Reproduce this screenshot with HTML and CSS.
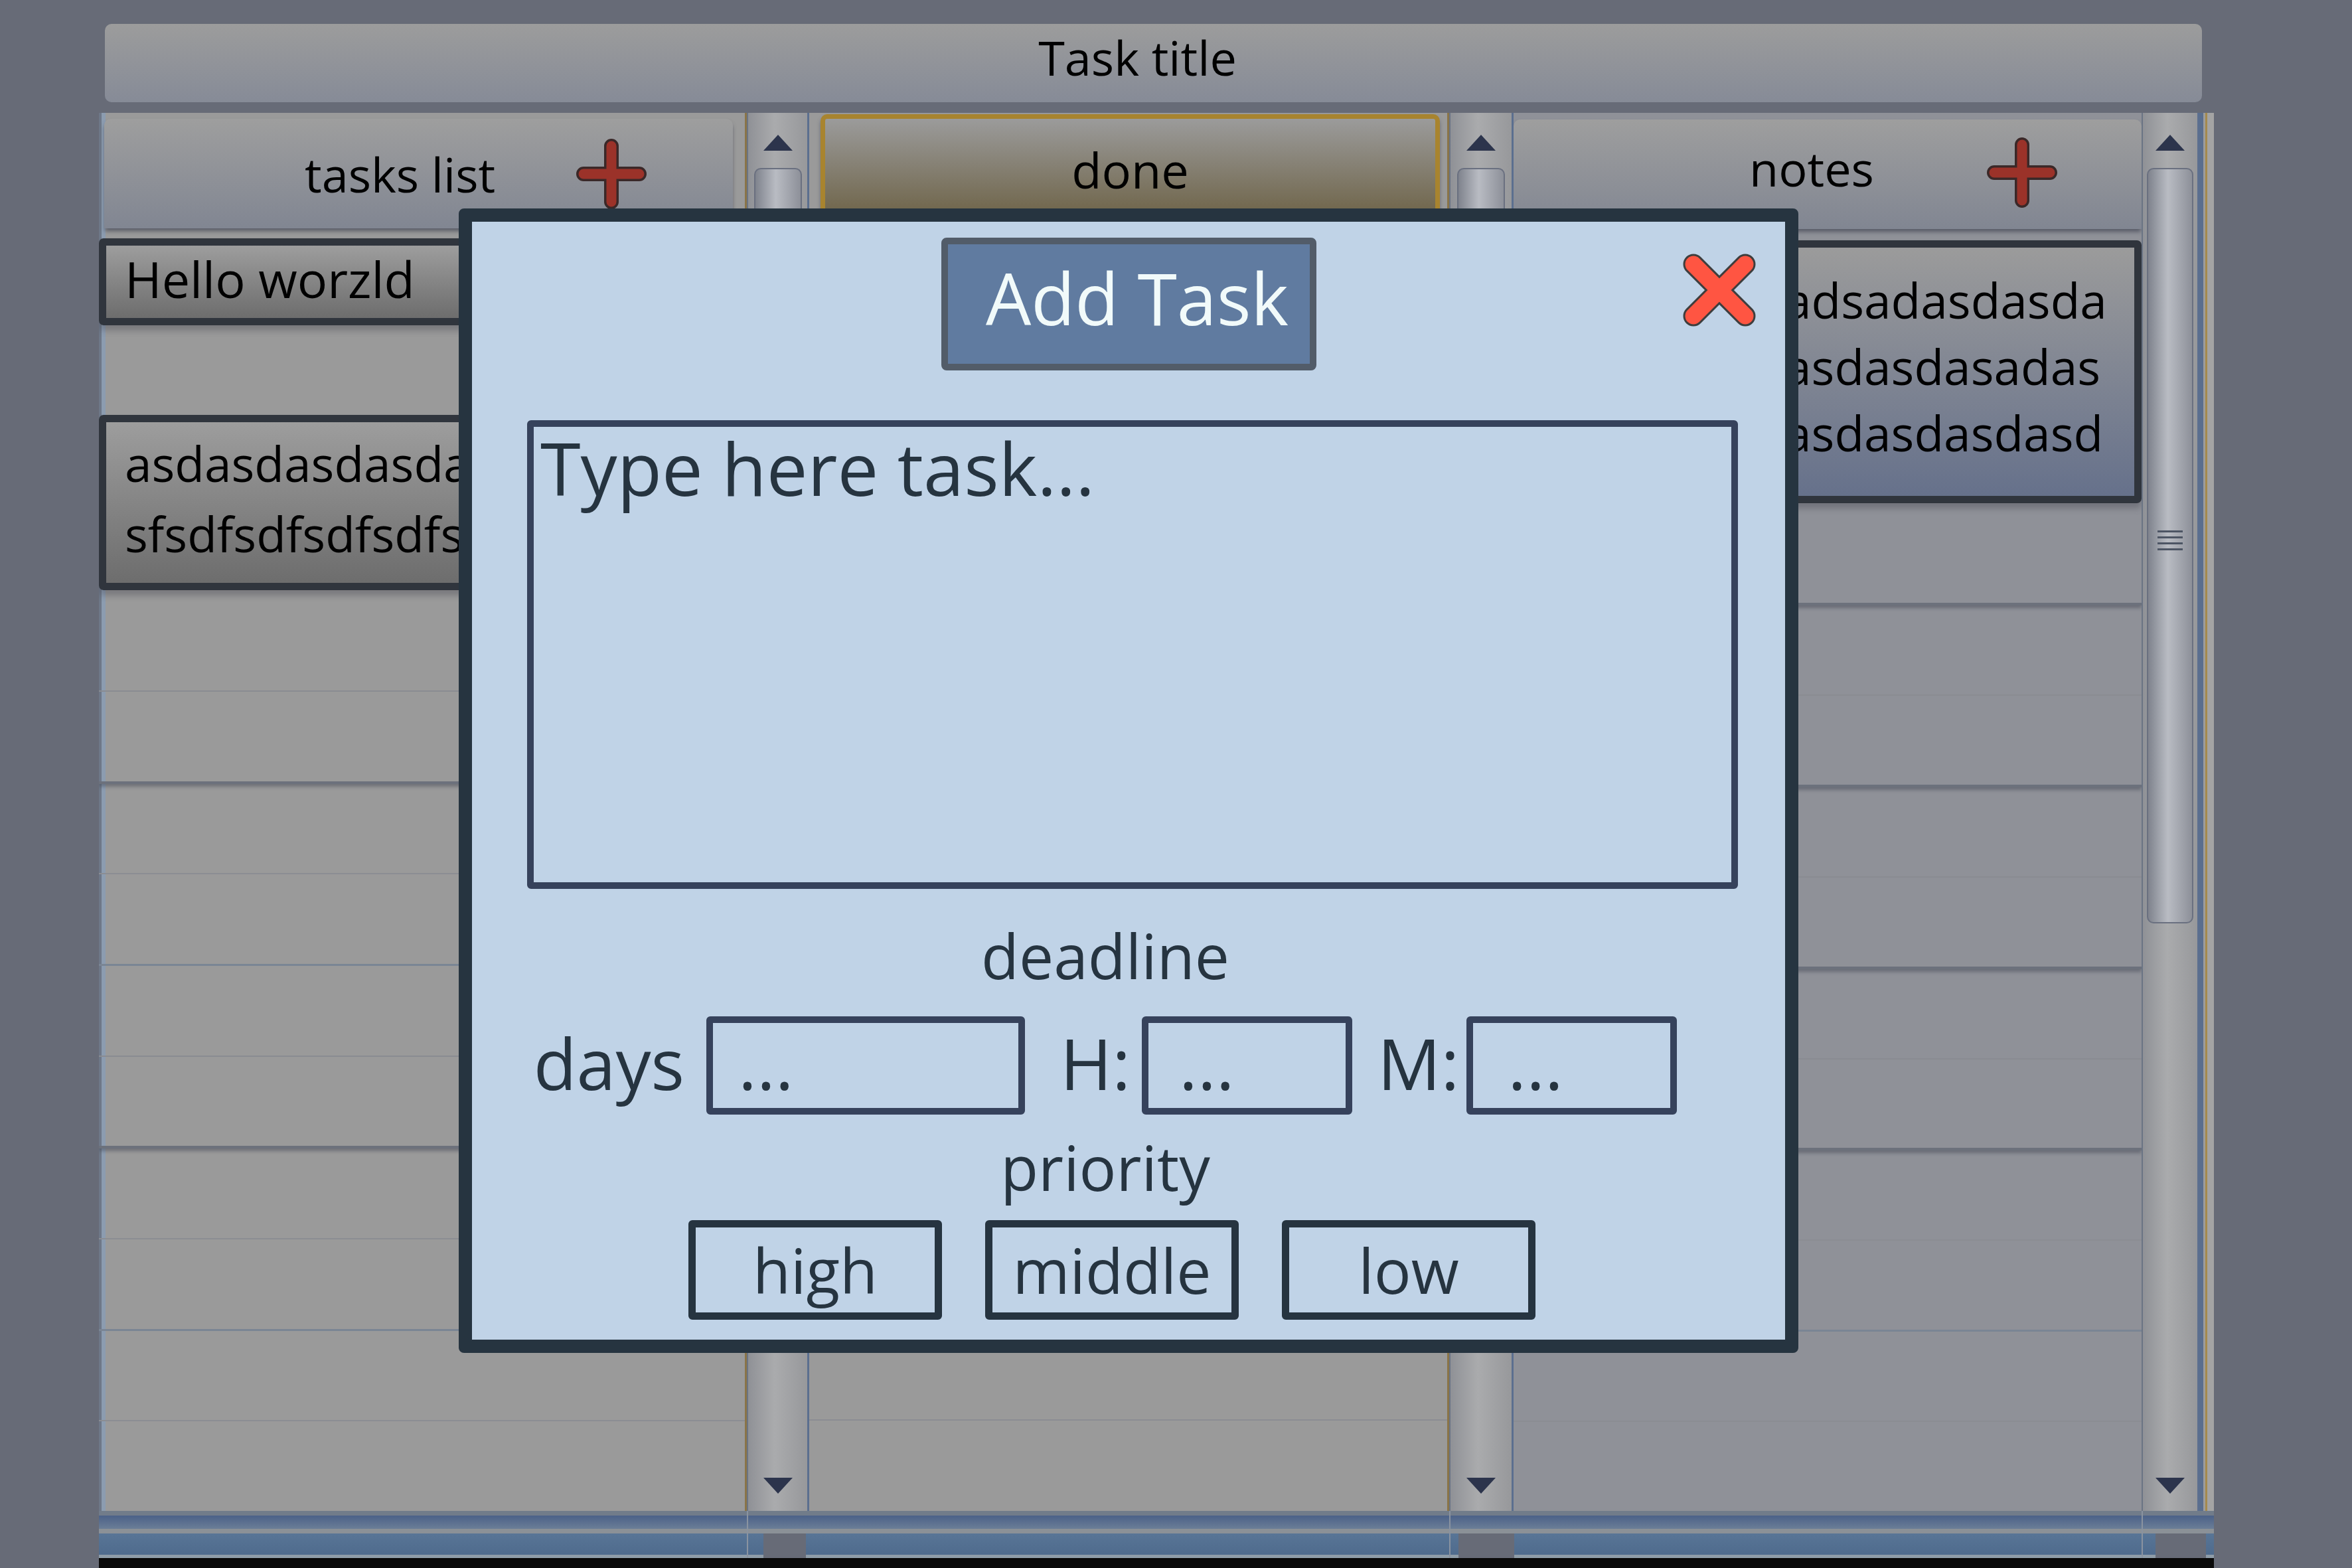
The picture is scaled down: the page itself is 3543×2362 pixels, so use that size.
FILE: index.html
```html
<!DOCTYPE html>
<html lang="en">
<head>
<meta charset="utf-8">
<title>Task board</title>
<link rel="stylesheet" href="styles.css">
</head>
<body>
<div class="app">
  <header class="titlebar"><h1 class="titlebar-text">Task title</h1></header>

  <main class="board">
    <section class="col col-tasks">
      <div class="col-head">
        <h2 class="col-title">tasks list</h2>
        <span class="add-icon"><svg viewBox="0 0 106 106" width="106" height="106"><path d="M53 11V95M11 53H95" fill="none" stroke="#3a2828" stroke-width="22" stroke-linecap="round"/><path d="M53 11V95M11 53H95" fill="none" stroke="#9b3229" stroke-width="15" stroke-linecap="round"/></svg></span>
      </div>
      <div class="col-body">
        <div class="card card-1">Hello worzld</div>
        <div class="slot"></div>
        <div class="card card-2">asdasdasdasdasdasdasd<br>sfsdfsdfsdfsdfsdfsdfs</div>
        <div class="rows">
          <div class="row row-lead"></div>
          <div class="row row-dark"></div>
          <div class="row"></div>
          <div class="row row-mid"></div>
          <div class="row"></div>
          <div class="row row-dark"></div>
          <div class="row"></div>
          <div class="row row-mid"></div>
          <div class="row"></div>
          <div class="row row-last"></div>
        </div>
      </div>
    </section>

    <div class="scroll"><span class="arrow-up"></span><span class="thumb"></span><span class="arrow-down"></span></div>

    <section class="col col-done">
      <div class="col-head">
        <h2 class="col-title">done</h2>
      </div>
      <div class="col-body">
        <div class="rows">
          <div class="row"></div><div class="row"></div><div class="row"></div><div class="row"></div>
          <div class="row"></div><div class="row"></div><div class="row"></div><div class="row"></div>
          <div class="row"></div><div class="row"></div><div class="row"></div><div class="row"></div>
          <div class="row"></div><div class="row row-last"></div>
        </div>
      </div>
    </section>

    <div class="scroll"><span class="arrow-up"></span><span class="thumb"></span><span class="arrow-down"></span></div>

    <section class="col col-notes">
      <div class="col-head">
        <h2 class="col-title">notes</h2>
        <span class="add-icon"><svg viewBox="0 0 106 106" width="106" height="106"><path d="M53 11V95M11 53H95" fill="none" stroke="#3a2828" stroke-width="22" stroke-linecap="round"/><path d="M53 11V95M11 53H95" fill="none" stroke="#9b3229" stroke-width="15" stroke-linecap="round"/></svg></span>
      </div>
      <div class="col-body">
        <div class="card card-note">asdasdasdadsadasdasda<br>asdasdasdasdasdasadas<br>asdasdasdasdasdasdasd</div>
        <div class="rows">
          <div class="row row-lead row-dark"></div>
          <div class="row"></div>
          <div class="row row-dark"></div>
          <div class="row"></div>
          <div class="row row-dark"></div>
          <div class="row"></div>
          <div class="row row-dark"></div>
          <div class="row"></div>
          <div class="row row-mid"></div>
          <div class="row"></div>
          <div class="row row-last"></div>
        </div>
      </div>
    </section>

    <div class="scroll scroll-notes"><span class="arrow-up"></span><span class="thumb thumb-long"><span class="grip"></span></span><span class="arrow-down"></span></div>

    <div class="edge"></div>
  </main>

  <div class="hbar">
    <div class="hcell"></div>
    <div class="hcell hcell-scroll"><span class="corner corner-1"></span></div>
    <div class="hcell"></div>
    <div class="hcell hcell-scroll"><span class="corner corner-2"></span></div>
    <div class="hcell"></div>
    <div class="hcell hcell-scroll"><span class="corner corner-3"></span></div>
    <div class="hcell"></div>
  </div>
  <div class="footer-black"></div>
</div>

<div class="modal" role="dialog" aria-label="Add Task">
  <div class="modal-head">
    <h2 class="modal-title">Add Task</h2>
    <button class="modal-close" aria-label="Close"><svg viewBox="0 0 114 114" width="114" height="114"><path d="M18 18L96 96M96 18L18 96" fill="none" stroke="#3e3e3e" stroke-width="31" stroke-linecap="round"/><path d="M18 18L96 96M96 18L18 96" fill="none" stroke="#ff5542" stroke-width="25" stroke-linecap="round"/></svg></button>
  </div>
  <textarea class="task-text" placeholder="Type here task..."></textarea>
  <div class="modal-form">
    <div class="section-label">deadline</div>
    <div class="date-row">
      <label class="date-label date-label-days">days</label><input class="date-field date-days" placeholder="...">
      <label class="date-label date-label-h">H:</label><input class="date-field date-h" placeholder="...">
      <label class="date-label date-label-m">M:</label><input class="date-field date-m" placeholder="...">
    </div>
    <div class="section-label section-priority">priority</div>
    <div class="priority-row">
      <button class="prio">high</button>
      <button class="prio">middle</button>
      <button class="prio">low</button>
    </div>
  </div>
</div>
</body>
</html>
```

FILE: styles.css
```css
html, body {
  margin: 0;
  padding: 0;
}

body {
  width: 3543px;
  height: 2362px;
  overflow: hidden;
  position: relative;
  background: #676b77;
  font-family: "Open Sans", "Noto Sans", sans-serif;
}

.app {
  display: flex;
  flex-direction: column;
  height: 100%;
}

/* ---------- title bar ---------- */
.titlebar {
  margin: 36px 226px 0 158px;
  height: 118px;
  flex: none;
  border-radius: 10px;
  background: linear-gradient(#9c9c9c, #868b97);
  display: flex;
  align-items: center;
  justify-content: center;
}

.titlebar-text {
  margin: 0 48px 18px 0;
  font-size: 72px;
  font-weight: 400;
  line-height: 1;
  color: #000;
}

/* ---------- board ---------- */
.board {
  flex: none;
  margin: 16px 0 0 149px;
  width: 3186px;
  height: 2106px;
  display: grid;
  grid-template-columns: 976px 94px 964px 97px 946px 87px 22px;
}

.col {
  display: flex;
  flex-direction: column;
  min-height: 0;
  overflow: hidden;
  background: #9a9a9a;
}

.col-tasks {
  border-right: 3px solid #8a7448;
  background: linear-gradient(90deg, #6e7888 0 4px, #8c9cb0 4px 10px, #9a9a9a 10px);
}

.col-done {
  border-right: 3px solid #8a7448;
}

.col-notes {
  background: #8f9198;
}

.col-head {
  flex: none;
  position: relative;
  z-index: 1;
  height: 165px;
  margin: 9px 18px 0 8px;
  border-radius: 10px 10px 0 0;
  background: linear-gradient(#9e9e9e, #818692);
  display: flex;
  align-items: center;
  box-shadow: 0 5px 6px -1px rgba(66, 70, 84, 0.75);
}

.col-title {
  margin: 0;
  font-size: 72px;
  font-weight: 400;
  line-height: 1;
  color: #000;
}

.add-icon {
  display: block;
  width: 106px;
  height: 106px;
}

.add-icon svg {
  display: block;
}

.col-tasks .col-title {
  margin-left: 302px;
}

.col-tasks .add-icon {
  margin-left: 122px;
}

.col-done .col-head {
  box-sizing: border-box;
  height: 173px;
  margin: 2px 11px 0 17px;
  border: 7px solid #a8842f;
  border-bottom: 0;
  justify-content: center;
  background: linear-gradient(#9b9b9b, #695d3e);
}

.col-done .col-title {
  font-size: 74px;
  margin-bottom: 12px;
}

.col-notes .col-head {
  margin: 10px 0 0 0;
}

.col-notes .col-title {
  margin: 0 0 19px 355px;
}

.col-notes .add-icon {
  margin: 0 0 5px 170px;
}

.col-body {
  flex: 1;
  min-height: 0;
  display: flex;
  flex-direction: column;
}

/* ---------- cards ---------- */
.card {
  flex: none;
  box-sizing: border-box;
  border: 11px solid #30353d;
  border-radius: 7px;
  background: linear-gradient(#9d9d9d, #6d6d6d);
  font-size: 73px;
  color: #000;
  white-space: nowrap;
  overflow: hidden;
  box-shadow: 0 8px 10px rgba(60, 60, 72, 0.35);
}

.card-1 {
  margin: 15px 15px 0 0;
  height: 131px;
  padding: 10px 0 0 28px;
  font-size: 75.5px;
  line-height: 80px;
}

.slot {
  flex: none;
  height: 135px;
}

.card-2 {
  height: 264px;
  margin-right: 15px;
  padding: 9px 0 0 28px;
  line-height: 106px;
}

.card-note {
  margin-top: 17px;
  height: 396px;
  padding: 29px 0 0 37px;
  line-height: 100px;
  background: linear-gradient(#9b9b9b, #66718b);
}

/* ---------- list rows ---------- */
.rows {
  flex: 1;
  display: flex;
  flex-direction: column;
}

.row {
  flex: 1 1 0;
  border-bottom: 2px solid #8b8d93;
}

.row-lead {
  flex-grow: 1.12;
}

.row-dark {
  border-bottom: 4px solid #6c717c;
  box-shadow: 0 4px 5px rgba(60, 64, 78, 0.45);
}

.row-mid {
  border-bottom: 3px solid #7a8594;
}

.row-last {
  border-bottom: 0;
}

/* ---------- scrollbars ---------- */
.scroll {
  display: flex;
  flex-direction: column;
  align-items: center;
  border-left: 2px solid #6a7484;
  border-right: 3px solid #5b6f8f;
  background: linear-gradient(90deg, #8f9196, #aaabad 45%, #97989b);
}

.arrow-up {
  width: 0;
  height: 0;
  margin-top: 33px;
  border-left: 22px solid transparent;
  border-right: 22px solid transparent;
  border-bottom: 24px solid #2c344c;
}

.arrow-down {
  width: 0;
  height: 0;
  margin-top: auto;
  margin-bottom: 26px;
  border-left: 22px solid transparent;
  border-right: 22px solid transparent;
  border-top: 24px solid #2c344c;
}

.thumb {
  margin-top: 26px;
  width: 72px;
  height: 1100px;
  box-sizing: border-box;
  border: 2px solid #6a7080;
  border-radius: 10px;
  background: linear-gradient(90deg, #7f838d, #b9bcc3 45%, #8d9099);
  display: flex;
  align-items: center;
  justify-content: center;
}

.thumb-long {
  height: 1138px;
  width: 70px;
}

.grip {
  width: 38px;
  height: 30px;
  margin-bottom: 16px;
  background: repeating-linear-gradient(#4d5564 0 3px, transparent 3px 9px);
}

.edge {
  background: linear-gradient(90deg, #5a6e8e 0 6px, #9c9c9c 6px 9px, #a58a4e 9px 12px, #a4a4a4 12px);
}

/* ---------- bottom bar ---------- */
.hbar {
  flex: none;
  margin-left: 149px;
  width: 3186px;
  height: 71px;
  display: grid;
  grid-template-columns: 976px 94px 964px 97px 946px 87px 22px;
  background: linear-gradient(#717c8a 0 7px, #4b6188 7px, #6b7e97 27px, #8b9197 27px 34px, #587596 34px, #4f6b8d 66px, #8e9ca8 66px 71px);
}

.hcell-scroll {
  border-left: 2px solid #8a93a0;
}

.corner {
  display: block;
  margin-top: 34px;
  height: 37px;
  background: #676b77;
}

.corner-1 {
  margin-left: 23px;
  width: 64px;
}

.corner-2 {
  margin-left: 12px;
  width: 84px;
}

.corner-3 {
  margin-left: 19px;
  width: 76px;
}

.footer-black {
  flex: none;
  margin-left: 149px;
  width: 3186px;
  height: 15px;
  background: #0a0a0a;
}

/* ---------- modal ---------- */
.modal {
  position: absolute;
  z-index: 10;
  left: 691px;
  top: 314px;
  width: 2018px;
  height: 1724px;
  box-sizing: border-box;
  border: 20px solid #263440;
  border-radius: 8px;
  background: #c0d3e7;
  color: #263440;
  display: flex;
  flex-direction: column;
}

.modal-head {
  display: grid;
  grid-template-columns: 1fr auto 1fr;
  align-items: start;
  padding-top: 24px;
}

.modal-title {
  grid-column: 2;
  margin: 0;
  box-sizing: border-box;
  width: 565px;
  height: 200px;
  border: 10px solid #525c69;
  border-radius: 8px;
  background: #607ba0;
  color: #f1fafa;
  font-size: 108px;
  font-weight: 400;
  line-height: 162px;
  padding: 0 0 18px 26px;
  text-align: center;
}

.modal-close {
  justify-self: end;
  margin: 22px 42px 0 0;
  padding: 0;
  border: 0;
  background: none;
  width: 114px;
  height: 114px;
}

.modal-close svg {
  display: block;
}

.task-text {
  display: block;
  margin: 75px 71px 0 83px;
  height: 706px;
  box-sizing: border-box;
  border: 10px solid #36425c;
  border-radius: 6px;
  background: transparent;
  padding: 1px 10px 3px;
  font-family: inherit;
  font-size: 110px;
  line-height: 120px;
  color: #263440;
  resize: none;
  overflow: hidden;
  outline: none;
}

.task-text::placeholder {
  color: #263440;
  opacity: 1;
}

.modal-form {
  margin-right: 70px;
  display: flex;
  flex-direction: column;
  align-items: center;
}

.section-label {
  margin-top: 50px;
  font-size: 93px;
  line-height: 100px;
}

.section-priority {
  margin-top: 29px;
}

.date-row {
  margin-top: 42px;
  display: flex;
  align-items: flex-start;
}

.date-label {
  font-size: 106px;
  line-height: 140px;
}

.date-label-days {
  margin: 0 33px 0 0;
}

.date-label-h {
  margin: 0 17px 0 53px;
}

.date-label-m {
  margin: 0 11px 0 38px;
}

.date-field {
  box-sizing: border-box;
  height: 148px;
  width: 317px;
  border: 10px solid #36425c;
  border-radius: 6px;
  background: transparent;
  padding: 0 0 8px 46px;
  font-family: inherit;
  font-size: 106px;
  color: #263440;
  outline: none;
}

.date-field::placeholder {
  color: #263440;
  opacity: 1;
}

.date-days {
  width: 480px;
  padding-left: 38px;
}

.date-m {
  padding-left: 52px;
}

.priority-row {
  margin: 30px 0 0 20px;
  display: flex;
  gap: 65px;
}

.prio {
  box-sizing: border-box;
  width: 382px;
  height: 150px;
  padding: 0;
  border: 11px solid #263440;
  border-radius: 6px;
  background: transparent;
  font-family: inherit;
  font-size: 93px;
  line-height: 128px;
  color: #263440;
}
```
